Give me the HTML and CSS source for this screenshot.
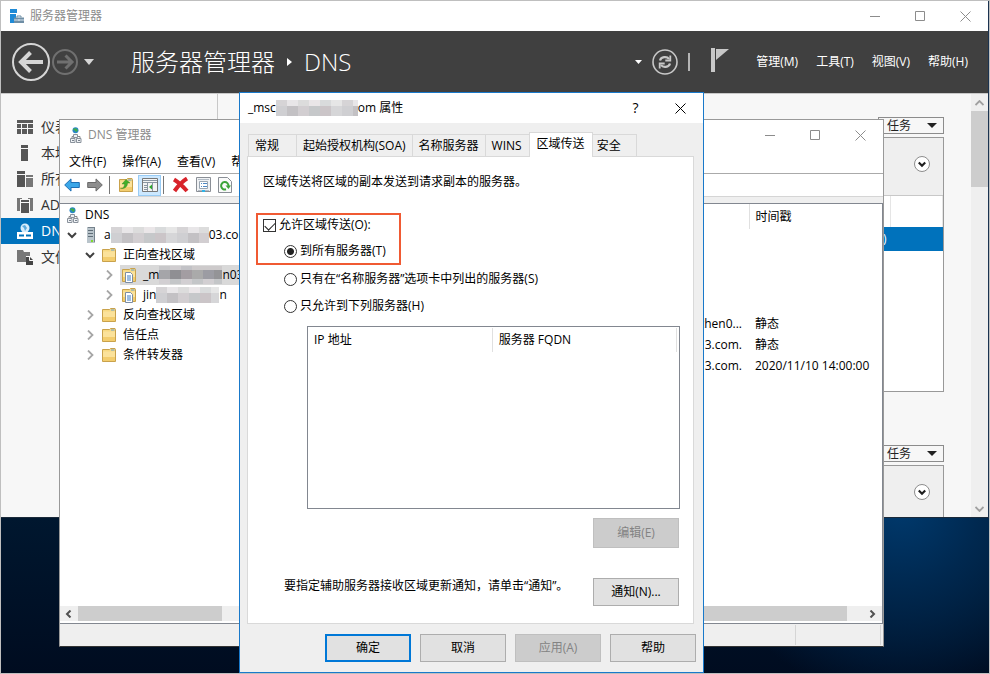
FILE: index.html
```html
<!DOCTYPE html>
<html lang="zh-CN">
<head>
    <meta charset="UTF-8">
    <meta name="viewport" content="width=device-width, initial-scale=1.0">
    <title>服务器管理器</title>
    <link rel="stylesheet" href="styles.css">
</head>
<body>
    <!-- 共用图标 -->
    <svg class="sprite" aria-hidden="true">
        <symbol id="i-min" viewBox="0 0 11 11"><path d="M0 5.5h10" stroke="currentColor" fill="none"/></symbol>
        <symbol id="i-max" viewBox="0 0 11 11"><path d="M.5.5h9v9h-9z" stroke="currentColor" fill="none"/></symbol>
        <symbol id="i-close" viewBox="0 0 11 11"><path d="M.5.5l10 10M10.5.5l-10 10" stroke="currentColor" fill="none"/></symbol>
        <symbol id="i-open" viewBox="0 0 10 10"><path d="M1 3l4 4 4-4" stroke="#404040" stroke-width="2" fill="none"/></symbol>
        <symbol id="i-shut" viewBox="0 0 10 10"><path d="M3 .5l4.500 4.500L3 9.500" stroke="#a6a6a6" stroke-width="1.800" fill="none"/></symbol>
        <symbol id="i-folder" viewBox="0 0 16 16">
            <path d="M1.500 14.500V2.500h7l1-1h4.500l.5 1v12z" fill="#f7d983" stroke="#c9a24c"/>
            <path d="M10 3h3.500" stroke="#6a9fc8"/>
            <path d="M2 4.500h12V14H2z" fill="#fbe29b"/><path d="M2 10h12v4H2z" fill="#f3cd6e"/>
        </symbol>
        <symbol id="i-zone" viewBox="0 0 16 16">
            <use href="#i-folder"/>
            <path d="M4.500 5.500h5l2 2v8h-7z" fill="#fff" stroke="#7c8da3"/>
            <path d="M6 9h4M6 11h4M6 13h4" stroke="#3b7dc4"/>
        </symbol>
        <symbol id="i-dns" viewBox="0 0 12 16">
            <circle cx="5.500" cy="3.200" r="3" fill="#2a86c9"/><path d="M4 1.200l3 .5.800 1.800-1.800 1.800-1-1.800-2-.5z" fill="#3fae49"/>
            <path d="M5.500 7v2M2 12V9.500h8V12" stroke="#888" fill="none"/>
            <path d="M3.500 7.500h4v3h-4zM.5 11.500h4.500v4H.5zM6.500 11.500H11v4H6.500z" fill="#eef1f4" stroke="#8a929c"/>
            <path d="M2 13.500h2M8 13.500h2" stroke="#7a838e"/>
        </symbol>
        <symbol id="i-server" viewBox="0 0 10 16">
            <path d="M1 1l1-1h7v15l-1 1H1z" fill="#75828c"/><path d="M1 1h7v15H1z" fill="#b9c4cb"/>
            <path d="M2 3.500h5M2 6.500h5M2 9.500h5" stroke="#5f6d77"/><path d="M5 13h2v2H5z" fill="#7ddc2c"/>
        </symbol>
        <symbol id="i-arrow" viewBox="0 0 16 14"><path d="M.7 7L7 .9v3.600h8.300v5H7v3.600z"/></symbol>
        <symbol id="i-expand" viewBox="0 0 16 16"><circle cx="8" cy="8" r="7.500" fill="#fff" stroke="#8c8c8c"/><path d="M4.800 6.500L8 9.700l3.200-3.200" stroke="#1e1e1e" stroke-width="2.200" fill="none"/></symbol>
        <symbol id="i-down" viewBox="0 0 10 5"><path d="M0 0h10L5 5z" fill="currentColor"/></symbol>
    </svg>

    <main class="desktop">
        <!-- 服务器管理器 -->
        <section class="window manager">
            <div class="titlebar">
                <svg class="app-icon" viewBox="0 0 15 15"><path d="M0 0h7v4H0zM0 5h6v9H0z" fill="#1f8ad6"/><path d="M4 8.500h10v5.500H4z" fill="#6f8ea5"/><path d="M7 8.500V7h4v1.500" stroke="#6f8ea5" fill="none"/><path d="M4 11h10M9 10v2" stroke="#d8e4ee"/></svg>
                <span class="caption">服务器管理器</span>
                <button class="win-btn" aria-label="最小化"><svg><use href="#i-min"/></svg></button>
                <button class="win-btn" aria-label="最大化"><svg><use href="#i-max"/></svg></button>
                <button class="win-btn" aria-label="关闭"><svg><use href="#i-close"/></svg></button>
            </div>
            <header class="banner">
                <button class="plain" aria-label="后退"><svg width="38" height="38" viewBox="0 0 38 38" fill="none" stroke="#d6d6d6"><circle cx="19" cy="19" r="18" stroke-width="2"/><path d="M31 19H10" stroke-width="4"/><path d="M18.500 9.500L9 19l9.500 9.500" stroke-width="4"/></svg></button>
                <button class="plain" aria-label="前进"><svg width="26" height="26" viewBox="0 0 26 26" fill="none" stroke="#707070"><circle cx="13" cy="13" r="12" stroke-width="2"/><path d="M5 13h14M13.500 6.500L20 13l-6.500 6.500" stroke-width="3"/></svg></button>
                <button class="plain history" aria-label="历史记录"><svg width="10" height="6" viewBox="0 0 10 5" preserveAspectRatio="none"><path d="M0 0h10L5 5z" fill="#d6d6d6"/></svg></button>
                <h1>服务器管理器<svg width="5" height="8" viewBox="0 0 5 8"><path d="M0 0l5 4-5 4z" fill="#fff"/></svg>DNS</h1>
                <svg class="mini" width="7" height="4" viewBox="0 0 7 4"><path d="M0 0h7L3.500 4z" fill="#fff"/></svg>
                <button class="plain" aria-label="刷新"><svg width="26" height="26" viewBox="0 0 26 26" fill="none" stroke="#c8c8c8"><circle cx="13" cy="13" r="12" stroke-width="1.600"/><path d="M8 11.500c1-4 7-4.500 9-1.500M18 14.500c-1 4-7 4.500-9 1.500" stroke-width="2.200"/><path d="M18.300 6.500v5h-5M7.700 19.500v-5h5" stroke-width="1.800"/></svg></button>
                <span class="bar"></span>
                <button class="plain flag" aria-label="通知"><svg width="18" height="24" viewBox="0 0 18 24"><path d="M0 0h4v24H0zM5 1h13L5 12z" fill="#c8c8c8"/><path d="M4.500 1v11" stroke="#404040"/></svg></button>
                <nav class="banner-menu">
                    <button>管理(M)</button><button>工具(T)</button><button>视图(V)</button><button>帮助(H)</button>
                </nav>
            </header>
            <div class="manager-body">
                <nav class="side">
                    <a href="#"><svg viewBox="0 0 16 16" fill="#5a5a5a"><path d="M0 1h16v3H0zM0 5h4v4H0zM0 10h4v5H0zM5 5h5v4H5zM5 10h5v5H5zM11 5h5v4h-5zM11 10h5v5h-5z"/></svg>仪表</a>
                    <a href="#"><svg viewBox="0 0 16 16" fill="#555"><path d="M4 0h7v3H4zM4 4h7v12H4z"/></svg>本地</a>
                    <a href="#"><svg viewBox="0 0 16 16" fill="#555"><path d="M0 0h8v3H0zM0 4h8v12H0z"/><path d="M9 4h7v2H9zM9 7h7v9H9z" fill="#777"/></svg>所有</a>
                    <a href="#"><svg viewBox="0 0 16 16" fill="#555"><path d="M4 3h8v2H4zM4 6h8v10H4z"/><path d="M0 1h5v1H3v12H0zM16 1h-5v1h2v12h3z" fill="#777"/></svg>AD</a>
                    <a href="#" class="current"><svg viewBox="0 0 16 16"><circle cx="8" cy="5" r="4.500" fill="#d7ecfa"/><path d="M5 3l3-1 2 3-2 3-1-3z" fill="#5aa9dc"/><path d="M0 9h16v7H0z" fill="#fff"/><path d="M2 12.500h5M9 12.500h5" stroke="#0072bc" stroke-width="2"/></svg>DNS</a>
                    <a href="#"><svg viewBox="0 0 16 16"><path d="M0 1h6l1 2h6v4H9v6H0z" fill="#777"/><path d="M9 8h4l3 3v5H9z" fill="#444"/><path d="M12.500 8v3.500H16" stroke="#f7f7f7" fill="none"/></svg>文件</a>
                </nav>
                <div class="tiles">
                    <button class="tasks">任务<svg width="10" height="5"><use href="#i-down"/></svg></button>
                    <div class="tile">
                        <div class="tile-head"><button class="plain" aria-label="展开"><svg width="16" height="16"><use href="#i-expand"/></svg></button></div>
                        <table class="tile-table">
                            <tr><th></th><th class="last"></th></tr>
                            <tr class="picked"><td>)</td><td></td></tr>
                        </table>
                    </div>
                    <button class="tasks second">任务<svg width="10" height="5"><use href="#i-down"/></svg></button>
                    <div class="tile cut">
                        <div class="tile-head"><button class="plain" aria-label="展开"><svg width="16" height="16"><use href="#i-expand"/></svg></button></div>
                    </div>
                </div>
                <div class="vscroll">
                    <svg width="9" height="6" viewBox="0 0 9 6"><path d="M.5 5l4-4 4 4" stroke="#a0a0a0" stroke-width="1.800" fill="none"/></svg>
                    <span class="thumb"></span>
                    <svg width="9" height="6" viewBox="0 0 9 6"><path d="M.5 1l4 4 4-4" stroke="#a0a0a0" stroke-width="1.800" fill="none"/></svg>
                </div>
            </div>
        </section>

        <!-- DNS 管理器 -->
        <section class="window dns">
            <div class="titlebar">
                <svg class="app-icon small" viewBox="0 0 12 16"><use href="#i-dns"/></svg>
                <span class="caption">DNS 管理器</span>
                <button class="win-btn" aria-label="最小化"><svg><use href="#i-min"/></svg></button>
                <button class="win-btn" aria-label="最大化"><svg><use href="#i-max"/></svg></button>
                <button class="win-btn" aria-label="关闭"><svg><use href="#i-close"/></svg></button>
            </div>
            <nav class="menu"><button>文件(F)</button><button>操作(A)</button><button>查看(V)</button><button>帮助(H)</button></nav>
            <div class="toolbar">
                <button aria-label="后退"><svg width="16" height="14" fill="#3ba7e8" stroke="#1d6fb4"><use href="#i-arrow"/></svg></button>
                <button aria-label="前进"><svg class="flip" width="16" height="14" fill="#8d8d8d" stroke="#6a6a6a"><use href="#i-arrow"/></svg></button>
                <span class="sep"></span>
                <button aria-label="上一级"><svg width="16" height="16" viewBox="0 0 16 16"><use href="#i-folder"/><path d="M2.500 11.500c3 0 4-2 4-4.500H4l4-4.500L12 6H9.500c0 4-3 6-7 5.500z" fill="#43b02a" stroke="#2c7d1b" stroke-width=".4"/></svg></button>
                <button class="on" aria-label="显示/隐藏控制台树"><svg width="16" height="14" viewBox="0 0 16 14"><path d="M.5.5h15v13H.5z" fill="#f4f4f4" stroke="#777"/><path d="M1 2.500h14M1 4.500h14" stroke="#8a96a3"/><path d="M5.500 5v8M10.500 5v8M2 7.500h3M2 9.500h3M2 11.500h3" stroke="#8a96a3"/><path d="M10 6.500v5L7 9z" fill="#2fa62f"/></svg></button>
                <span class="sep"></span>
                <button aria-label="删除"><svg width="17" height="16" viewBox="0 0 17 16"><path d="M2 2.500c5 3 9 7 13 11.500M15 1.500C10 4.500 6 9 2.500 14" stroke="#d8232a" stroke-width="4" fill="none"/></svg></button>
                <button aria-label="属性"><svg width="15" height="16" viewBox="0 0 15 16"><path d="M.5.5h14v14H.5z" fill="#f0f2f4" stroke="#8a8f96"/><path d="M2 2.500h11M2 13.500h11" stroke="#b3bcc6"/><path d="M3.500 4.500h8v7h-8z" fill="#fff" stroke="#9aa6b2"/><path d="M5 6.500h1M5 9.500h1M7 6.500h4M7 9.500h4" stroke="#4d88c4"/><path d="M6 14h3" stroke="#2cb3e8" stroke-width="2"/></svg></button>
                <button aria-label="刷新"><svg width="14" height="16" viewBox="0 0 14 16"><path d="M.5.5h9l4 4v11H.5z" fill="#fafafa" stroke="#8a8f96"/><path d="M8 12.300A3.700 3.700 0 1 1 10.500 9" stroke="#3da43a" stroke-width="2" fill="none"/><path d="M7.500 8.500h5.500L10.500 12z" fill="#3da43a"/></svg></button>
            </div>
            <div class="panes">
                <div class="pane tree-pane">
                    <ul class="tree">
                        <li class="l0"><svg class="ico narrow"><use href="#i-dns"/></svg>DNS</li>
                        <li class="l1"><svg class="tw"><use href="#i-open"/></svg><svg class="ico slim"><use href="#i-server"/></svg>a<span class="mosaic long"></span>03.com</li>
                        <li class="l2"><svg class="tw"><use href="#i-open"/></svg><svg class="ico"><use href="#i-folder"/></svg>正向查找区域</li>
                        <li class="l3"><svg class="tw"><use href="#i-shut"/></svg><span class="picked"><svg class="ico"><use href="#i-zone"/></svg>_m<span class="mosaic dark"></span>n03.com</span></li>
                        <li class="l3"><svg class="tw"><use href="#i-shut"/></svg><span><svg class="ico"><use href="#i-zone"/></svg>jin<span class="mosaic"></span>n</span></li>
                        <li class="l2"><svg class="tw"><use href="#i-shut"/></svg><svg class="ico"><use href="#i-folder"/></svg>反向查找区域</li>
                        <li class="l2"><svg class="tw"><use href="#i-shut"/></svg><svg class="ico"><use href="#i-folder"/></svg>信任点</li>
                        <li class="l2"><svg class="tw"><use href="#i-shut"/></svg><svg class="ico"><use href="#i-folder"/></svg>条件转发器</li>
                    </ul>
                    <div class="hscroll left"><svg width="7" height="8" viewBox="0 0 7 8"><path d="M5.500.5L2 4l3.500 3.500" stroke="#505050" stroke-width="2" fill="none"/></svg><span class="thumb"></span></div>
                </div>
                <div class="pane list-pane">
                    <table class="records">
                        <tr><th></th><th>时间戳</th></tr>
                        <tr><td></td><td></td></tr>
                        <tr><td></td><td></td></tr>
                        <tr><td></td><td></td></tr>
                        <tr><td></td><td></td></tr>
                        <tr><td>chen0...</td><td>静态</td></tr>
                        <tr><td>3.com.</td><td>静态</td></tr>
                        <tr><td>3.com.</td><td>2020/11/10 14:00:00</td></tr>
                    </table>
                    <div class="hscroll right"><span class="thumb"></span><svg width="7" height="8" viewBox="0 0 7 8"><path d="M1.500.5L5 4 1.500 7.500" stroke="#505050" stroke-width="2" fill="none"/></svg></div>
                </div>
            </div>
            <div class="status"><span></span></div>
        </section>

        <!-- 属性对话框 -->
        <section class="window dialog" role="dialog">
            <div class="titlebar">
                <span class="caption">_msc<span class="mosaic title"></span>om 属性</span>
                <button class="win-btn help" aria-label="帮助">?</button>
                <button class="win-btn" aria-label="关闭"><svg><use href="#i-close"/></svg></button>
            </div>
            <form class="sheet">
                <div class="tabs" role="tablist">
                    <button type="button" role="tab">常规</button>
                    <button type="button" role="tab">起始授权机构(SOA)</button>
                    <button type="button" role="tab">名称服务器</button>
                    <button type="button" role="tab">WINS</button>
                    <button type="button" role="tab" class="active" aria-selected="true">区域传送</button>
                    <button type="button" role="tab">安全</button>
                </div>
                <div class="page">
                    <p class="intro">区域传送将区域的副本发送到请求副本的服务器。</p>
                    <div class="marked">
                        <label class="option"><input type="checkbox" checked>允许区域传送(O):</label>
                        <label class="option inner"><input type="radio" name="to" checked>到所有服务器(T)</label>
                    </div>
                    <label class="option outer"><input type="radio" name="to">只有在“名称服务器”选项卡中列出的服务器(S)</label>
                    <label class="option outer"><input type="radio" name="to">只允许到下列服务器(H)</label>
                    <div class="list">
                        <table>
                            <tr><th>IP 地址</th><th>服务器 FQDN</th></tr>
                        </table>
                    </div>
                    <div class="row edit"><button type="button" class="btn" disabled>编辑(E)</button></div>
                    <div class="row notify">
                        <p>要指定辅助服务器接收区域更新通知，请单击“通知”。</p>
                        <button type="button" class="btn">通知(N)...</button>
                    </div>
                </div>
                <div class="actions">
                    <button type="button" class="btn default">确定</button>
                    <button type="button" class="btn">取消</button>
                    <button type="button" class="btn" disabled>应用(A)</button>
                    <button type="button" class="btn">帮助</button>
                </div>
            </form>
        </section>
    </main>
</body>
</html>
```
FILE: styles.css
```css
* {
    box-sizing: border-box;
}
body {
    margin: 0;
    font-family: "Open Sans", "Noto Sans CJK SC", sans-serif;
    font-size: 12px;
    line-height: 16px;
    color: #000;
}
button {
    font: inherit;
    color: inherit;
    background: none;
    border: none;
    padding: 0;
    white-space: nowrap;
}
svg {
    display: block;
    flex: none;
}
p, h1, ul {
    margin: 0;
    padding: 0;
}
table {
    border-collapse: collapse;
    width: 100%;
}
th {
    font-weight: normal;
    text-align: left;
}
.sprite {
    position: absolute;
    width: 0;
    height: 0;
}
.desktop {
    position: relative;
    min-height: 100vh;
    border: 1px solid #bfbfbf;
    overflow: hidden;
    background:
        radial-gradient(circle at 91% 75%, #003a6e 0, #00284f 8%, transparent 19%),
        linear-gradient(#00172f 77%, #000c20);
}

/* 窗口 */
.window {
    position: absolute;
    display: flex;
    flex-direction: column;
}
.titlebar {
    display: flex;
    align-items: center;
    height: 30px;
    background: #fff;
    color: #8c8c8c;
}
.caption {
    display: flex;
    align-items: center;
    flex: 1;
    white-space: nowrap;
}
.app-icon {
    width: 15px;
    height: 15px;
    margin: 0 5px 0 9px;
}
.app-icon.small {
    width: 12px;
    height: 16px;
    margin: 0 6px 0 10px;
}
.win-btn {
    width: 45px;
    height: 28px;
    display: flex;
    align-items: center;
    justify-content: center;
}
.win-btn svg {
    width: 11px;
    height: 11px;
}
.win-btn.help {
    font-size: 14px;
}
.plain {
    display: flex;
}

/* 服务器管理器 */
.manager {
    top: 0;
    left: 0;
    right: 0;
    border-right: 1px solid #1b3350;
    border-bottom: 1px solid #1b2a3a;
}
.banner {
    display: flex;
    align-items: center;
    height: 62px;
    padding: 0 20px 0 11px;
    background: #404040;
    color: #fff;
}
.banner .plain + .plain {
    margin-left: 2px;
}
.banner .plain + .history {
    margin-left: 6px;
}
.banner h1 {
    display: flex;
    align-items: center;
    flex: 1;
    gap: 12px;
    margin-left: 37px;
    font-size: 24px;
    font-weight: 300;
    line-height: 32px;
    white-space: nowrap;
}
.mini {
    margin-right: 10px;
}
.bar {
    width: 2px;
    height: 18px;
    margin: 0 21px 0 10px;
    background: #b4b4b4;
}
.flag {
    margin-right: 27px;
    margin-bottom: 4px;
}
.banner-menu {
    display: flex;
    gap: 18px;
}
.manager-body {
    display: flex;
    border-top: 1px solid #c8c8c8;
    background: #f7f7f7;
}
.side {
    width: 217px;
    padding-top: 20px;
    border-right: 1px solid #c8c8c8;
    font-size: 14px;
    color: #333;
}
.side a {
    display: flex;
    align-items: center;
    gap: 8px;
    height: 26px;
    padding-left: 16px;
    color: inherit;
    text-decoration: none;
}
.side svg {
    width: 16px;
    height: 16px;
}
.side .current {
    background: #0072bc;
    color: #fff;
}
.tiles {
    flex: 1;
    display: flex;
    flex-direction: column;
    padding: 23px 27px 0 20px;
}
.tasks {
    display: flex;
    align-items: center;
    justify-content: space-between;
    align-self: flex-end;
    width: 66px;
    height: 17px;
    margin-bottom: 3px;
    padding: 0 6px 0 8px;
    border: 1px solid #8c8c8c;
    color: #222;
}
.tasks.second {
    margin-top: 53px;
}
.tile {
    min-height: 255px;
    border: 1px solid #999;
    background: #fff;
}
.tile.cut {
    min-height: 52px;
    border-bottom: none;
    background: #efefef;
}
.tile-head {
    display: flex;
    justify-content: flex-end;
    height: 58px;
    padding: 18px 13px 0;
    border-bottom: 1px solid #c8c8c8;
    background: #efefef;
}
.cut .tile-head {
    height: 50px;
    border: none;
}
.tile-table th {
    height: 31px;
    border-right: 1px solid #e5e5e5;
}
.tile-table .last {
    width: 52px;
}
.tile-table td {
    height: 24px;
    padding: 0 4px;
    text-align: right;
}
.tile-table .picked {
    background: #0072bc;
    color: #fff;
}
.vscroll {
    display: flex;
    flex-direction: column;
    align-items: center;
    width: 17px;
    padding: 6px 0 5px;
    background: #efefef;
}
.vscroll .thumb {
    width: 17px;
    height: 76px;
    margin: 5px 0 auto;
    background: #cdcdcd;
}

/* DNS 管理器 */
.dns {
    top: 118px;
    left: 58px;
    right: 105px;
    border: 1px solid #999;
    border-bottom-color: #333;
    background: #efefef;
}
.menu {
    display: flex;
    gap: 16px;
    height: 24px;
    padding-left: 9px;
    border-bottom: 1px solid #aaa;
    background: #fff;
}
.toolbar {
    display: flex;
    align-items: center;
    height: 23px;
    padding-left: 4px;
    border-bottom: 1px solid #d5d5d5;
    background: #fff;
}
.toolbar button {
    display: flex;
    justify-content: center;
    margin-right: 7px;
}
.toolbar .sep {
    width: 1px;
    height: 18px;
    margin: 0 8px 0 -1px;
    background: #777;
}
.toolbar .on {
    align-items: center;
    width: 23px;
    height: 21px;
    margin: 0 3px 0 -3px;
    border: 1px solid #99ccf5;
    background: #cce8ff;
}
.flip {
    transform: scaleX(-1);
}
.panes {
    display: flex;
    margin-top: 6px;
    border: 1px solid #828790;
    border-left: none;
    background: #fff;
}
.pane {
    display: flex;
    flex-direction: column;
    justify-content: space-between;
    min-height: 419px;
    padding-bottom: 2px;
}
.tree-pane {
    width: 240px;
    overflow: hidden;
    border-right: 1px solid #828790;
}
.list-pane {
    flex: 1;
}
.tree {
    padding-top: 1px;
    list-style: none;
}
.tree li, .tree li span {
    display: flex;
    align-items: center;
    height: 20px;
    white-space: nowrap;
}
.tree .picked {
    flex: 1;
    background: #d9d9d9;
}
.l0 { padding-left: 7px; }
.l1 { padding-left: 7px; }
.l2 { padding-left: 25px; }
.l3 { padding-left: 44px; }
.tw {
    width: 10px;
    height: 10px;
    margin-right: 6px;
}
.l3 .ico {
    margin-left: 1px;
}
.ico {
    width: 16px;
    height: 16px;
    margin-right: 6px;
}
.ico.narrow {
    width: 12px;
}
.ico.slim {
    width: 10px;
    margin: 0 8px 0 3px;
}
.mosaic, .tree li .mosaic {
    display: block;
    flex: none;
    width: 63px;
    height: 16px;
    background:
        linear-gradient(90deg, #d6d4d6 11px, #e8e6e8 11px 22px, #dcdcdc 22px 33px, #eae6e8 33px 44px, #d9dbdc 44px 55px, #e6e6e6 55px) 0 0 / 66px 6px repeat-x,
        linear-gradient(90deg, #cfcfd2 11px, #c3c1c4 11px 22px, #d2ced1 22px 33px, #c6c8ca 33px 44px, #cbc5c8 44px 55px, #d6d6d8 55px) 0 6px / 66px 10px repeat-x;
}
.tree li .mosaic.long {
    width: 98px;
}
.tree li .mosaic.dark {
    height: 18px;
    background:
        linear-gradient(90deg, #c8c8ca 11px, #d0cdd0 11px 22px, #c2c2c6 22px 33px, #cdcacb 33px) 0 0 / 66px 4px repeat-x,
        linear-gradient(90deg, #a5a5a9 11px, #8f8f93 11px 22px, #a39da2 22px 33px, #aaa 33px 44px, #9c9ca3 44px 55px, #949497 55px) 0 4px / 66px 9px repeat-x,
        linear-gradient(90deg, #d2cfd2 50%, #c4c6c8 50%) 0 13px / 22px 5px repeat-x;
}
.mosaic.title {
    width: 82px;
}
.records th, .records td {
    height: 21px;
    padding: 0 6px;
    white-space: nowrap;
}
.records th {
    height: 25px;
}
.records th:first-child {
    border-right: 1px solid #e0e0e0;
}
.records td:first-child {
    padding-right: 7px;
    text-align: right;
}
.records th:last-child {
    width: 133px;
}
.hscroll {
    display: flex;
    align-items: center;
    height: 15px;
    background: #efefef;
}
.hscroll .thumb {
    height: 15px;
    background: #cdcdcd;
}
.hscroll.left svg {
    margin: 0 6px 0 5px;
}
.hscroll.left .thumb {
    width: 144px;
}
.hscroll.right .thumb {
    flex: 1;
    margin-right: 22px;
}
.hscroll.right svg {
    margin-right: 6px;
}
.status {
    display: flex;
    justify-content: flex-end;
    height: 22px;
    padding: 1px 2px;
}
.status span {
    width: 86px;
    border: 1px solid #d5d5d5;
    border-width: 0 1px;
}

/* 属性对话框 */
.dialog {
    top: 91px;
    left: 238px;
    right: 285px;
    border: 1px solid #1979ca;
    background: #efefef;
}
.dialog .titlebar {
    padding-left: 8px;
    color: #000;
}
.sheet {
    padding: 9px 7px 10px;
}
.tabs {
    display: flex;
    align-items: flex-end;
    padding-left: 1px;
}
.tabs button {
    height: 22px;
    min-width: 44px;
    padding: 0 6px;
    border: 1px solid #d9d9d9;
    border-width: 1px 1px 0 0;
    text-align: left;
}
.tabs button:first-child {
    min-width: 49px;
    border-left-width: 1px;
}
.tabs button:last-child {
    padding-left: 4px;
}
.tabs .active {
    height: 25px;
    margin: 0 0 -1px -1px;
    padding: 0 7px 3px;
    border-left-width: 1px;
    background: #fff;
    position: relative;
}
.page {
    margin-right: 2px;
    padding: 15px 13px 17px 8px;
    border: 1px solid #d9d9d9;
    background: #fff;
}
.intro {
    margin: 0 0 21px 7px;
    line-height: 20px;
}
.marked {
    width: fit-content;
    margin-bottom: 4px;
    padding: 0 13px 2px 5px;
    border: 2px solid #f05a33;
}
.option {
    display: flex;
    align-items: center;
    gap: 3px;
    height: 20px;
}
.option.inner {
    margin: 6px 0 0 21px;
}
.option.outer {
    margin: 0 0 7px 28px;
}
.option input {
    appearance: none;
    flex: none;
    width: 13px;
    height: 13px;
    margin: 0;
    border: 1px solid #333;
    background: #fff;
}
.option input[type="radio"] {
    border-radius: 50%;
}
.option input[type="radio"]:checked {
    background: radial-gradient(circle, #222 3px, #fff 4px);
}
.option input[type="checkbox"]:checked::before {
    content: "";
    display: block;
    width: 9px;
    height: 5px;
    margin: 2px 0 0 1px;
    border: 1px solid #222;
    border-width: 0 0 1px 1px;
    transform: rotate(-45deg);
}
.list {
    min-height: 183px;
    margin: 10px 0 0 51px;
    padding: 1px 2px 0 0;
    border: 1px solid #828790;
}
.list th {
    width: 50%;
    height: 24px;
    padding-left: 6px;
    border-right: 1px solid #e0e0e0;
}
.row {
    display: flex;
    justify-content: flex-end;
    margin: 9px 1px 0 0;
}
.row.edit .btn {
    height: 30px;
}
.row.notify {
    justify-content: space-between;
    align-items: flex-start;
    margin: 30px 1px 0 28px;
}
.btn {
    width: 86px;
    height: 28px;
    border: 1px solid #adadad;
    background: #e1e1e1;
}
.btn:disabled {
    border-color: #bfbfbf;
    background: #ccc;
    color: #838383;
}
.btn.default {
    border: 2px solid #0078d7;
}
.actions {
    display: flex;
    justify-content: flex-end;
    gap: 9px;
    margin-top: 10px;
}
```
